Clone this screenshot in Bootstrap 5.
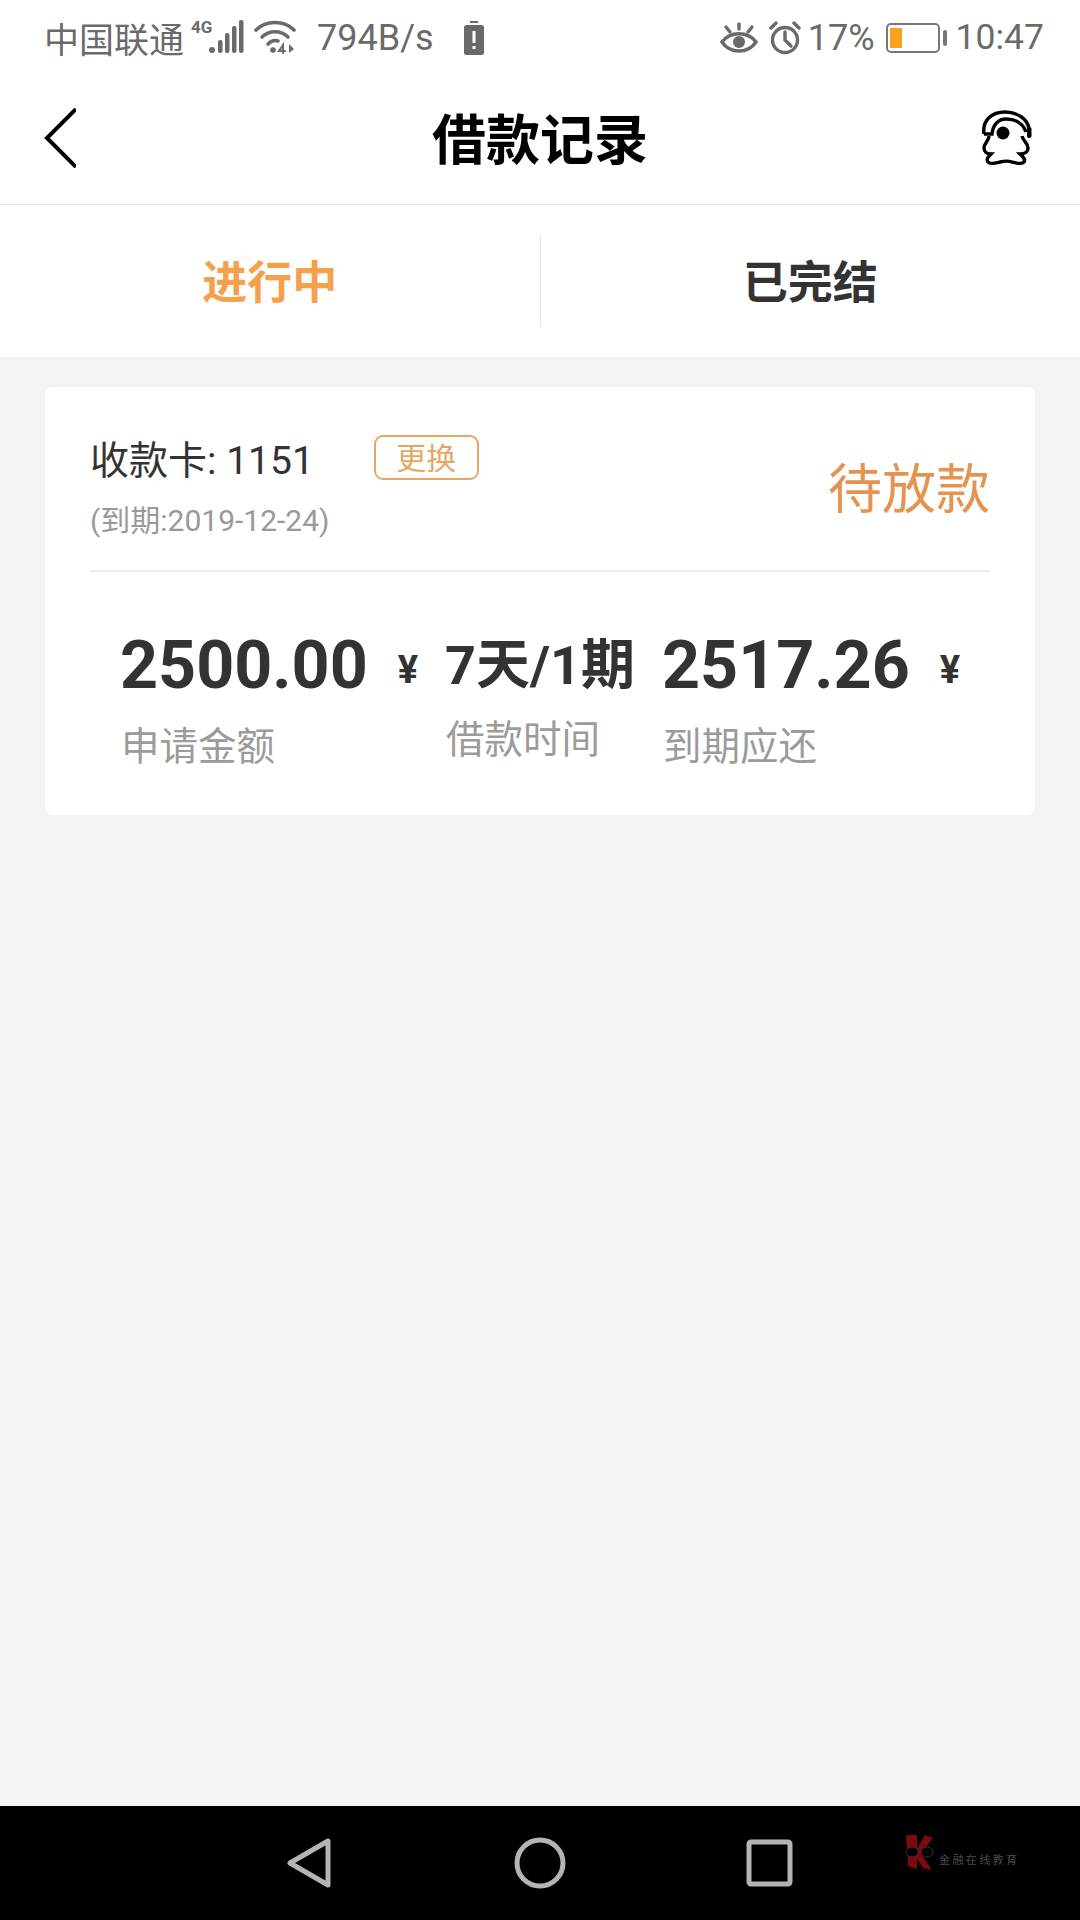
<!DOCTYPE html>
<html lang="zh-CN">
<head>
    <meta charset="UTF-8">
    <meta name="viewport" content="width=device-width, initial-scale=1.0">
    <title>借款记录</title>
    <link href="https://cdn.jsdelivr.net/npm/bootstrap@5.3.2/dist/css/bootstrap.min.css" rel="stylesheet">
    <style>
        html, body {
            height: 1920px;
            margin: 0;
        }
        body {
            width: 1080px;
            background: #f4f4f4;
            font-family: Roboto, "Noto Sans CJK SC", sans-serif;
            overflow: hidden;
        }
        main {
            flex: 1;
        }
        .status-bar {
            height: 75px;
            padding: 0 36px 0 44px;
            color: #6a6a6a;
            font-size: 36px;
            line-height: 1;
        }
        .status-bar svg { display: block; flex: none; }
        .carrier { width: 144px; font-family: "Noto Sans CJK SC", sans-serif; font-size: 35px; }
        .sig-icon { margin-top: -6px; }
        .wifi-icon { margin-left: 10px; margin-top: -2px; }
        .net-speed { margin-left: 21px; width: 147px; }
        .eye-icon { margin-left: auto; }
        .clock-icon { margin-left: 10px; }
        .pct-text { margin-left: 6px; }
        .batt-icon { margin-left: 11px; }
        .time-text { margin-left: 8px; font-size: 35.5px; }
        .top-bar {
            height: 130px;
            padding: 0 48px;
            border-bottom: 1px solid #e2e2e2;
        }
        .top-side { width: 50px; }
        .back-icon { margin: -4px 0 0 -4px; }
        .help-icon { margin-top: -4px; }
        .top-title {
            font-family: "Noto Sans CJK SC", sans-serif;
            font-size: 54px;
            font-weight: 700;
            color: #000;
            line-height: 1;
            margin-top: -5px;
        }
        .tab-row { height: 152px; }
        .tab-item {
            flex: 1;
            font-family: "Noto Sans CJK SC", sans-serif;
            font-size: 45px;
            font-weight: 700;
            color: #333;
            line-height: 1;
            margin-top: -3px;
        }
        .tab-item.on { color: #f5a04d; }
        .tab-line { width: 1px; height: 90px; background: #e2e2e2; }
        .loan-card {
            margin: 30px 45px 0;
            height: 428px;
            padding: 0 45px;
            border: 0;
            border-radius: 8px;
        }
        .card-top { height: 185px; border-bottom: 2px solid #ebebeb; }
        .card-no { font-size: 39px; color: #333; line-height: 1; margin-top: 48px; white-space: nowrap; }
        .card-no b { font-weight: 400; font-family: "Noto Sans CJK SC", sans-serif; }
        .swap-tag {
            display: inline-block;
            width: 105px;
            height: 45px;
            margin-left: 60px;
            border: 2px solid #e5a765;
            border-radius: 9px;
            color: #e5a765;
            font-family: "Noto Sans CJK SC", sans-serif;
            font-size: 30px;
            line-height: 39px;
            text-align: center;
            vertical-align: 5px;
        }
        .due-date { font-size: 30px; color: #999; line-height: 1; margin-top: 22px; }
        .due-date span { font-family: "Noto Sans CJK SC", sans-serif; }
        .state-text {
            font-family: "Noto Sans CJK SC", sans-serif;
            font-size: 54px;
            color: #e39450;
            line-height: 1;
            margin-top: 72px;
        }
        .amount-row { padding: 60px 0 0 30px; }
        .col-one { width: 325px; }
        .col-two { width: 217px; }
        .big-val {
            font-size: 66.4px;
            font-weight: 700;
            color: #333;
            line-height: 1;
            white-space: nowrap;
        }
        .mid-val {
            font-size: 54px;
            font-weight: 700;
            color: #333;
            line-height: 1;
            white-space: nowrap;
            margin-top: 2px;
        }
        .mid-val b { font-family: "Noto Sans CJK SC", sans-serif; font-weight: 700; }
        .big-val small {
            font-size: 38px;
            font-weight: 700;
            margin-left: 30px;
            vertical-align: 5px;
        }
        .item-label {
            font-family: "Noto Sans CJK SC", sans-serif;
            font-size: 38.5px;
            color: #9b9b9b;
            line-height: 1;
            margin: 26px 0 0 1px;
        }
        .mid-val + .item-label { margin-top: 24px; }
        .bottom-bar { height: 114px; background: #000; }
        .bottom-bar svg { position: absolute; top: 0; left: 0; }
        .brand-text {
            position: absolute;
            left: 939px;
            top: 48px;
            color: #4a4a4a;
            font-family: "Noto Sans CJK SC", sans-serif;
            font-size: 11px;
            letter-spacing: 2.4px;
            line-height: 1;
            white-space: nowrap;
        }
    </style>
</head>
<body class="d-flex flex-column">
    <div class="status-bar bg-white d-flex align-items-center">
        <span class="carrier">中国联通</span>
        <svg class="sig-icon" width="56" height="40" viewBox="0 -4 56 40" fill="#6a6a6a">
            <text x="3" y="14" font-family="Roboto, sans-serif" font-size="17" font-weight="700">4G</text>
            <circle cx="24" cy="31" r="3"/>
            <rect x="30" y="21" width="4.5" height="13" rx="2"/>
            <rect x="37" y="14" width="4.5" height="20" rx="2"/>
            <rect x="44" y="7" width="4.5" height="27" rx="2"/>
            <rect x="51" y="1" width="4.5" height="33" rx="2"/>
        </svg>
        <svg class="wifi-icon" width="42" height="36" viewBox="0 0 42 36" fill="none" stroke="#6a6a6a" stroke-width="3.6" stroke-linecap="round">
            <path d="M2 11C12 1 30 1 40 11"/>
            <path d="M8 18C15 11 27 11 34 18"/>
            <path d="M14 25C17 22 21 21 24 22"/>
            <circle cx="19" cy="31" r="2.8" fill="#6a6a6a" stroke="none"/>
            <path d="M29 34V26L25 32H31" stroke-width="2"/>
            <path d="M35 25L40 30L35 34Z" stroke="none" fill="#6a6a6a"/>
        </svg>
        <span class="net-speed">794B/s</span>
        <svg width="20" height="34" viewBox="0 0 20 34">
            <rect x="6" y="0" width="8" height="2" fill="#6a6a6a"/>
            <rect x="0" y="4" width="20" height="30" rx="2.5" fill="#6a6a6a"/>
            <rect x="8.5" y="10" width="3" height="12" fill="#fff"/>
            <rect x="8.5" y="25" width="3" height="3" fill="#fff"/>
        </svg>
        <svg class="eye-icon" width="38" height="32" viewBox="0 0 38 32" fill="none" stroke="#6a6a6a" stroke-width="3.4" stroke-linecap="round">
            <path d="M2 20C10 9 28 9 36 20C28 32 10 32 2 20Z"/>
            <circle cx="19" cy="20" r="6" fill="#6a6a6a" stroke="none"/>
            <path d="M19 2V7M6 5L10 10M32 5L28 10"/>
        </svg>
        <svg class="clock-icon" width="34" height="34" viewBox="0 0 34 34" fill="none" stroke="#6a6a6a" stroke-width="3.4" stroke-linecap="round">
            <circle cx="17" cy="19" r="12.5"/>
            <path d="M17 11V19L23 25"/>
            <path d="M3 7L8 2M31 7L26 2"/>
        </svg>
        <span class="pct-text">17%</span>
        <svg class="batt-icon" width="62" height="30" viewBox="0 0 62 30">
            <rect x="1" y="1" width="52" height="28" rx="4" fill="#fff" stroke="#777" stroke-width="2"/>
            <rect x="4" y="5" width="12" height="20" fill="#f7a11f"/>
            <rect x="57" y="7" width="4" height="16" rx="2" fill="#777"/>
        </svg>
        <span class="time-text">10:47</span>
    </div>

    <div class="top-bar bg-white d-flex align-items-center justify-content-between">
        <div class="top-side">
            <svg class="back-icon d-block" width="32" height="60" viewBox="0 0 32 60" fill="none" stroke="#000" stroke-width="4">
                <path d="M32 1L3 30L32 59"/>
            </svg>
        </div>
        <span class="top-title">借款记录</span>
        <div class="top-side">
            <svg class="help-icon d-block" width="50" height="56" viewBox="0 0 50 56" fill="none" stroke="#000" stroke-width="3.4">
                <path d="M2 24C0 10 10 2 23 2C35 2 46 9 47 19"/>
                <path d="M2 24H10C11 14 17 9 24 9C33 9 41 13 44 22"/>
                <rect x="45" y="17" width="4.5" height="11" rx="2" fill="#000" stroke="none"/>
                <circle cx="21" cy="23" r="6.5" fill="#000" stroke="none"/>
                <path d="M7 26C7 31 2 33 2 38C2 42 5 44 9 44C6 47 4 49 6 52C8 55 14 53 18 52C22 51 27 51 30 52C34 53 40 55 42 52C44 49 41 47 38 44C42 44 46 42 46 38C46 33 41 31 40 26"/>
            </svg>
        </div>
    </div>

    <div class="tab-row bg-white d-flex align-items-center">
        <div class="tab-item on text-center">进行中</div>
        <div class="tab-line"></div>
        <div class="tab-item text-center">已完结</div>
    </div>

    <main>
        <div class="card loan-card">
            <div class="card-top d-flex justify-content-between">
                <div>
                    <div class="card-no"><b>收款卡</b>: 1151<span class="swap-tag">更换</span></div>
                    <div class="due-date">(<span>到期</span>:2019-12-24)</div>
                </div>
                <div class="state-text">待放款</div>
            </div>
            <div class="amount-row d-flex">
                <div class="col-one">
                    <div class="big-val">2500.00<small>¥</small></div>
                    <div class="item-label">申请金额</div>
                </div>
                <div class="col-two">
                    <div class="mid-val">7<b>天</b>/1<b>期</b></div>
                    <div class="item-label">借款时间</div>
                </div>
                <div>
                    <div class="big-val">2517.26<small>¥</small></div>
                    <div class="item-label">到期应还</div>
                </div>
            </div>
        </div>
    </main>

    <div class="bottom-bar position-relative">
        <svg width="1080" height="114" viewBox="0 0 1080 114" fill="none" stroke="#b4b4b4" stroke-width="5" stroke-linejoin="round">
            <path d="M328 35V79L290 57Z"/>
            <ellipse cx="540" cy="57" rx="23" ry="23"/>
            <rect x="749" y="36" width="41" height="42" rx="2"/>
            <path d="M906 29H917V63L908 60Z" fill="#7d0a0f" stroke="none"/>
            <path d="M925 29L933 32L921 48L932 64L923 62L914 48Z" fill="#7d0a0f" stroke="none"/>
            <ellipse cx="912" cy="46" rx="6" ry="5" fill="#000" stroke="#333" stroke-width="1"/>
            <ellipse cx="927" cy="46" rx="6" ry="5" fill="#000" stroke="#333" stroke-width="1"/>
        </svg>
        <span class="brand-text">金融在线教育</span>
    </div>
    <script src="https://cdn.jsdelivr.net/npm/bootstrap@5.3.2/dist/js/bootstrap.bundle.min.js"></script>
</body>
</html>
